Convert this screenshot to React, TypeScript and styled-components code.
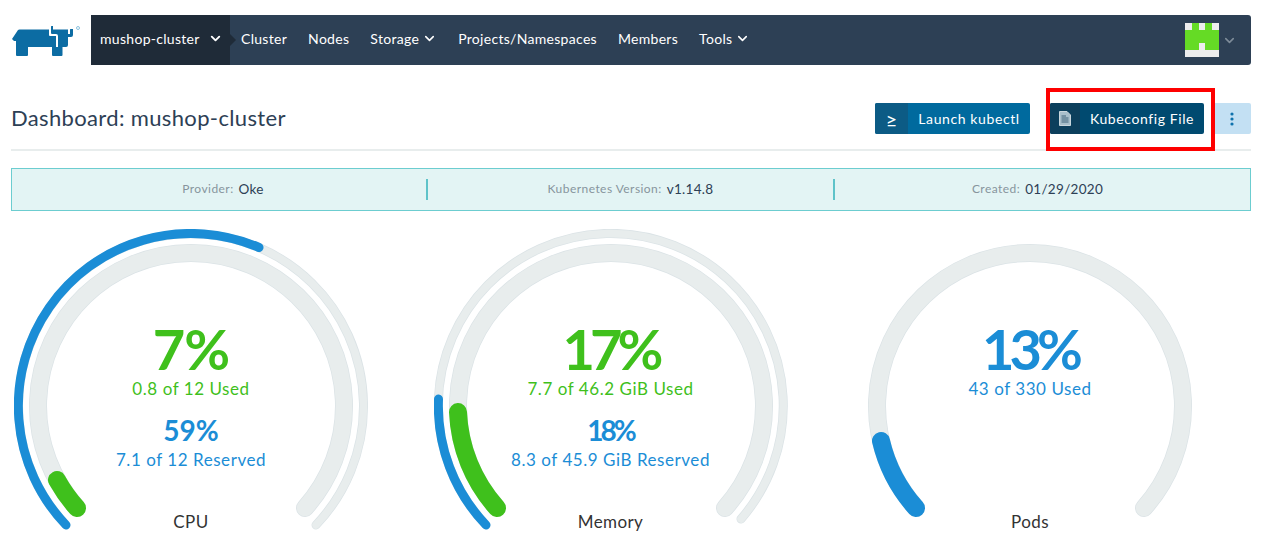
import React from 'react';
import styled, { createGlobalStyle } from 'styled-components';
import { FiChevronDown } from 'react-icons/fi';

const GlobalStyle = createGlobalStyle`
    html, body {
        margin: 0;
        padding: 0;
        background: #fff;
        font-family: "Lato", "Noto Sans", sans-serif;
    }
`;

const Page = styled.div`
    position: relative;
    width: 1266px;
    height: 554px;
    overflow: hidden;
    padding-top: 15px;
    box-sizing: border-box;
`;

const TopRow = styled.div`
    display: flex;
    align-items: center;
    padding: 0 15px 0 12px;
`;

const LogoBox = styled.div`
    width: 79px;
    height: 50px;
    display: flex;
    align-items: center;
    flex-shrink: 0;
`;

const NavBar = styled.nav`
    flex: 1;
    height: 50px;
    display: flex;
    align-items: center;
    background: #2d4055;
    border-radius: 0 3px 3px 0;
    color: #fff;
    font-size: 14px;
    letter-spacing: 0.3px;
`;

const ClusterPicker = styled.div`
    position: relative;
    width: 139px;
    height: 50px;
    box-sizing: border-box;
    padding: 0 0 3px 9px;
    display: flex;
    align-items: center;
    gap: 8px;
    background: #1f2b38;

    &::after {
        content: '';
        position: absolute;
        right: -6px;
        top: 19px;
        border-left: 6px solid #1f2b38;
        border-top: 6px solid transparent;
        border-bottom: 6px solid transparent;
    }
`;

const NavLinks = styled.div`
    display: flex;
    align-items: center;
    gap: 21px;
    padding: 0 0 3px 11px;
    flex: 1;
`;

const NavLink = styled.span`
    display: inline-flex;
    align-items: center;
    gap: 3px;
`;

const Avatar = styled.div`
    width: 34px;
    height: 34px;
    flex-shrink: 0;
`;

const UserMenu = styled.div`
    display: flex;
    align-items: center;
    gap: 3px;
    padding-right: 14px;
    color: #7e8c99;
`;

const Header = styled.div`
    margin: 16px 15px 0 11px;
    height: 70px;
    padding-top: 22px;
    box-sizing: border-box;
    display: flex;
    align-items: flex-start;
    border-bottom: 2px solid #e8eded;
`;

const Title = styled.h1`
    flex: 1;
    margin: 0;
    font-size: 22px;
    line-height: 30px;
    font-weight: 400;
    letter-spacing: 0.35px;
    color: #2d4055;
`;

const ActionButton = styled.button<{ $bg: string; $iconBg: string; $iconWidth: number; $width: number }>`
    display: flex;
    align-items: stretch;
    width: ${p => p.$width}px;
    height: 31px;
    margin-left: ${p => (p.$iconWidth === 30 ? 20 : 0)}px;
    padding: 0;
    border: 0;
    border-radius: 2px;
    overflow: hidden;
    background: ${p => p.$bg};
    color: #fff;
    font-family: inherit;
    font-size: 14px;
    letter-spacing: 0.6px;

    & > span:first-child {
        width: ${p => p.$iconWidth}px;
        background: ${p => p.$iconBg};
        display: flex;
        align-items: center;
        justify-content: center;
        flex-shrink: 0;
        font-size: 20px;
        letter-spacing: 0;
    }
    & > span:last-child {
        flex: 1;
        display: flex;
        align-items: center;
        justify-content: center;
    }
`;

const MoreButton = styled.button`
    width: 36px;
    height: 31px;
    margin-left: 11px;
    padding: 0 2px 0 0;
    border: 0;
    border-radius: 0 2px 2px 0;
    background: #c3e0f3;
    display: flex;
    align-items: center;
    justify-content: center;
`;

const Callout = styled.div`
    position: absolute;
    left: 1046px;
    top: 88px;
    width: 169px;
    height: 63px;
    box-sizing: border-box;
    border: 4px solid #fe0000;
`;

const InfoBanner = styled.div`
    margin: 17px 15px 0 11px;
    height: 43px;
    box-sizing: border-box;
    border: 1px solid #6ccdd0;
    background: #e3f4f4;
    display: grid;
    grid-template-columns: 416px 407px 1fr;
    align-items: center;
`;

const InfoCell = styled.div<{ $divider?: boolean; $padLeft?: number; $padRight?: number }>`
    height: 21px;
    display: flex;
    align-items: center;
    justify-content: center;
    gap: 5px;
    box-sizing: border-box;
    padding: 0 ${p => p.$padRight ?? 0}px 2px ${p => p.$padLeft ?? 0}px;
    border-right: ${p => (p.$divider ? '2px solid #5fc3c9' : '0')};
`;

const InfoLabel = styled.span`
    font-size: 12px;
    letter-spacing: 0.45px;
    color: #87949d;
`;

const InfoValue = styled.span`
    font-size: 13.5px;
    letter-spacing: 0.3px;
    color: #2d4055;
`;

const GaugeRow = styled.div`
    display: grid;
    grid-template-columns: repeat(3, 354px);
    column-gap: 65.5px;
    margin: 18px 0 0 14px;
`;

const Gauge = styled.div`
    position: relative;
    width: 354px;
    height: 310px;
    text-align: center;
    padding-top: 91px;
    box-sizing: border-box;
`;

const GaugeSvg = styled.svg`
    position: absolute;
    left: 0;
    top: 0;
`;

const BigPercent = styled.div<{ $color: string; $tight?: boolean }>`
    position: relative;
    font-size: 56px;
    line-height: 58px;
    font-weight: 700;
    letter-spacing: ${p => (p.$tight ? -5 : -1)}px;
    color: ${p => p.$color};
`;

const UsedText = styled.div<{ $color: string }>`
    position: relative;
    font-size: 17px;
    line-height: 22px;
    letter-spacing: 0.55px;
    color: ${p => p.$color};
`;

const SmallPercent = styled.div<{ $color: string; $tight?: boolean }>`
    position: relative;
    margin: 15px 0 4px;
    font-size: 28px;
    line-height: 30px;
    font-weight: 700;
    letter-spacing: ${p => (p.$tight ? -3 : 0)}px;
    color: ${p => p.$color};
`;

const GaugeLabel = styled.div`
    position: absolute;
    left: 0;
    right: 0;
    top: 282px;
    font-size: 17px;
    line-height: 22px;
    letter-spacing: 0.4px;
    color: #333;
`;

const GREEN = '#3fc01c';
const BLUE = '#1b8dd6';
const TRACK = '#e8eded';
const TRACK_EDGE = '#dbe3e6';
const CX = 177;
const CY = 177;

// dx, dy are relative to the gauge centre
const arc = (r: number, from: [number, number], to: [number, number], large: boolean) =>
    `M${CX + from[0]} ${CY + from[1]} A${r} ${r} 0 ${large ? 1 : 0} 1 ${CX + to[0]} ${CY + to[1]}`;

type RingProps = {
    r: number;
    width: number;
    from: [number, number];
    trackTo: [number, number];
    valueTo: [number, number];
    color: string;
};

const Ring: React.FC<RingProps> = ({ r, width, from, trackTo, valueTo, color }) => (
    <>
        <path d={arc(r, from, trackTo, true)} fill="none" stroke={TRACK_EDGE} strokeWidth={width} strokeLinecap="round" />
        <path d={arc(r, from, trackTo, true)} fill="none" stroke={TRACK} strokeWidth={width - 1.5} strokeLinecap="round" />
        <path d={arc(r, from, valueTo, false)} fill="none" stroke={color} strokeWidth={width} strokeLinecap="round" />
    </>
);

const Logo = () => (
    <svg width="68" height="31" viewBox="0 0 68 31">
        <path
            fill="#0c6ca3"
            d="M0 14 L6 5 Q6.500 4.500 7.500 4.500 H37 V10 Q37 11 38 11 H44 V22 H50.500 V30 Q50.500 31 49.500 31 H41 Q40 31 40 30 V22 H16 V30 Q16 31 15 31 H5 Q4 31 4 30 V16 H2 Z"
        />
        <path
            fill="#0c6ca3"
            d="M39 1.500 Q39 1 39.500 1 H41 V4.500 H56 V20 Q56 22 54 22 H46 V11 Q46 9 44 9 H40 Q39 9 39 8 Z"
        />
        <path fill="#0c6ca3" d="M56 9 H58 V4.500 Q58 4 58.500 4 H61 V10 Q61 12 59 12 H56 Z" />
        <circle cx="66" cy="3" r="1.500" fill="none" stroke="#6fb2d6" strokeWidth="0.8" />
    </svg>
);

const Identicon = () => (
    <svg width="34" height="34" viewBox="0 0 5 5" shapeRendering="crispEdges">
        <rect width="5" height="5" fill="#65db25" />
        <rect x="0" y="0" width="1" height="1" fill="#ededed" />
        <rect x="2" y="0" width="1" height="1" fill="#ededed" />
        <rect x="4" y="0" width="1" height="1" fill="#ededed" />
        <rect x="2" y="3" width="1" height="1" fill="#ededed" />
        <rect x="0" y="4" width="5" height="1" fill="#ededed" />
    </svg>
);

const FileIcon = () => (
    <svg width="12" height="15" viewBox="0 0 12 15">
        <path d="M.5.500 H8 L11.500 4 V14.500 H.5 Z" fill="#a9bfcb" stroke="#c9d6dd" strokeWidth="1" />
        <path d="M2.500 5 H7 M2.500 7 H9.500 M2.500 9 H9.500 M2.500 11 H9.500" stroke="#335a72" strokeWidth="0.9" />
    </svg>
);

const KebabIcon = () => (
    <svg width="4" height="14" viewBox="0 0 4 14">
        <circle cx="2" cy="2" r="1.600" fill="#0f72ad" />
        <circle cx="2" cy="7" r="1.600" fill="#0f72ad" />
        <circle cx="2" cy="12" r="1.600" fill="#0f72ad" />
    </svg>
);

const App: React.FC = () => {
    return (
        <Page>
            <GlobalStyle />
            <TopRow>
                <LogoBox>
                    <Logo />
                </LogoBox>
                <NavBar>
                    <ClusterPicker>
                        mushop-cluster
                        <FiChevronDown size={15} strokeWidth={3} />
                    </ClusterPicker>
                    <NavLinks>
                        <NavLink>Cluster</NavLink>
                        <NavLink>Nodes</NavLink>
                        <NavLink>Storage <FiChevronDown size={15} strokeWidth={2.5} /></NavLink>
                        <NavLink>Projects/Namespaces</NavLink>
                        <NavLink>Members</NavLink>
                        <NavLink>Tools <FiChevronDown size={15} strokeWidth={2.5} /></NavLink>
                    </NavLinks>
                    <UserMenu>
                        <Avatar>
                            <Identicon />
                        </Avatar>
                        <FiChevronDown size={15} strokeWidth={2.5} />
                    </UserMenu>
                </NavBar>
            </TopRow>

            <Header>
                <Title>Dashboard: mushop-cluster</Title>
                <ActionButton $bg="#006a9e" $iconBg="#0c5b85" $iconWidth={33} $width={155}>
                    <span>≥</span>
                    <span>Launch kubectl</span>
                </ActionButton>
                <ActionButton $bg="#004a70" $iconBg="#0c3f5c" $iconWidth={30} $width={154}>
                    <span><FileIcon /></span>
                    <span>Kubeconfig File</span>
                </ActionButton>
                <MoreButton aria-label="More actions">
                    <KebabIcon />
                </MoreButton>
            </Header>
            <Callout />

            <InfoBanner>
                <InfoCell $divider $padLeft={8}>
                    <InfoLabel>Provider:</InfoLabel>
                    <InfoValue>Oke</InfoValue>
                </InfoCell>
                <InfoCell $divider>
                    <InfoLabel>Kubernetes Version:</InfoLabel>
                    <InfoValue>v1.14.8</InfoValue>
                </InfoCell>
                <InfoCell $padRight={10}>
                    <InfoLabel>Created:</InfoLabel>
                    <InfoValue>01/29/2020</InfoValue>
                </InfoCell>
            </InfoBanner>

            <GaugeRow>
                <Gauge>
                    <GaugeSvg width="354" height="310" viewBox="0 0 354 310">
                        <Ring r={172.5} width={9} from={[-125, 119]} trackTo={[125, 119]} valueTo={[68, -158.500]} color={BLUE} />
                        <Ring r={153} width={18} from={[-114, 102]} trackTo={[114, 102]} valueTo={[-134, 74]} color={GREEN} />
                    </GaugeSvg>
                    <BigPercent $color={GREEN}>7%</BigPercent>
                    <UsedText $color={GREEN}>0.8 of 12 Used</UsedText>
                    <SmallPercent $color={BLUE}>59%</SmallPercent>
                    <UsedText $color={BLUE}>7.1 of 12 Reserved</UsedText>
                    <GaugeLabel>CPU</GaugeLabel>
                </Gauge>
                <Gauge>
                    <GaugeSvg width="354" height="310" viewBox="0 0 354 310">
                        <Ring r={172.5} width={9} from={[-125, 119]} trackTo={[130, 113]} valueTo={[-172.500, -7]} color={BLUE} />
                        <Ring r={153} width={18} from={[-114, 102]} trackTo={[114, 102]} valueTo={[-153, 6]} color={GREEN} />
                    </GaugeSvg>
                    <BigPercent $color={GREEN} $tight>17%</BigPercent>
                    <UsedText $color={GREEN}>7.7 of 46.2 GiB Used</UsedText>
                    <SmallPercent $color={BLUE} $tight>18%</SmallPercent>
                    <UsedText $color={BLUE}>8.3 of 45.9 GiB Reserved</UsedText>
                    <GaugeLabel>Memory</GaugeLabel>
                </Gauge>
                <Gauge>
                    <GaugeSvg width="354" height="310" viewBox="0 0 354 310">
                        <Ring r={153} width={18} from={[-114, 102]} trackTo={[114, 102]} valueTo={[-149, 35]} color={BLUE} />
                    </GaugeSvg>
                    <BigPercent $color={BLUE} $tight>13%</BigPercent>
                    <UsedText $color={BLUE}>43 of 330 Used</UsedText>
                    <GaugeLabel>Pods</GaugeLabel>
                </Gauge>
            </GaugeRow>
        </Page>
    );
};

export default App;
